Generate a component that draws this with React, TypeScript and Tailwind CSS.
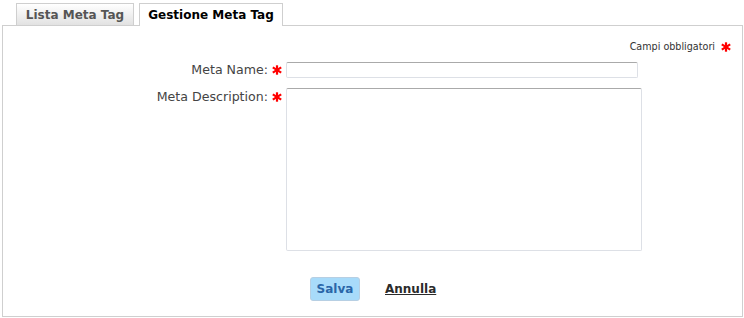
import React from "react";

const Star = () => (
  <svg width="10" height="10" viewBox="0 0 10 10" className="shrink-0">
    <g stroke="#ff0000" strokeWidth="2.2" strokeLinecap="butt">
      <line x1="5" y1="0.3" x2="5" y2="9.7" />
      <line x1="0.8" y1="2.4" x2="9.2" y2="7.6" />
      <line x1="9.2" y1="2.4" x2="0.8" y2="7.6" />
    </g>
  </svg>
);

export default function App() {
  return (
    <div
      className="w-[744px] h-[318px] bg-white pt-[3px] overflow-hidden"
      style={{ fontFamily: '"DejaVu Sans", Verdana, sans-serif' }}
    >
      <div className="flex ml-[16px] gap-[5px] h-[22px] relative z-10">
        <div className="w-[118px] h-[22px] border border-b-0 border-[#cfcfcf] bg-gradient-to-b from-white to-[#e2e2e2] flex items-center justify-center text-[12px] font-bold text-[#555]">
          Lista Meta Tag
        </div>
        <div className="w-[144px] h-[23px] border border-b-0 border-[#cfcfcf] bg-white flex items-center justify-center text-[12px] font-bold text-black pb-[1px]">
          Gestione Meta Tag
        </div>
      </div>
      <div className="ml-[2px] w-[741px] h-[292px] border border-[#cfcfcf] flex flex-col">
        <div className="flex justify-end items-center gap-[6px] pr-[11px] mt-[14px] h-[13px] leading-[13px] text-[9.6px] text-[#333]">
          <span>Campi obbligatori</span>
          <Star />
        </div>
        <div className="flex items-center mt-[9px]">
          <div className="w-[279px] flex justify-end items-center gap-[4px] text-[12.6px] leading-[16px] text-[#444]">
            <span>Meta Name:</span>
            <Star />
          </div>
          <input
            type="text"
            className="ml-[4px] w-[352px] h-[16px] border border-[#dde0e6] border-t-[#aaaaaa] rounded-[2px] bg-white outline-none"
          />
        </div>
        <div className="flex items-start mt-[10px]">
          <div className="w-[279px] flex justify-end items-center gap-[4px] text-[12.6px] leading-[16px] text-[#444] mt-[1px]">
            <span>Meta Description:</span>
            <Star />
          </div>
          <textarea className="ml-[4px] w-[356px] h-[163px] border border-[#dde0e6] border-t-[#aaaaaa] rounded-[2px] bg-white outline-none resize-none" />
        </div>
        <div className="flex items-center mt-[26px]">
          <button className="ml-[307px] w-[50px] h-[24px] rounded-[3px] border border-[#b7cfe3] bg-[#a8dbfa] text-[12px] font-bold text-[#2a66a8]">
            Salva
          </button>
          <a className="ml-[25px] text-[12px] font-bold text-[#2b2b2b] underline">Annulla</a>
        </div>
      </div>
    </div>
  );
}
